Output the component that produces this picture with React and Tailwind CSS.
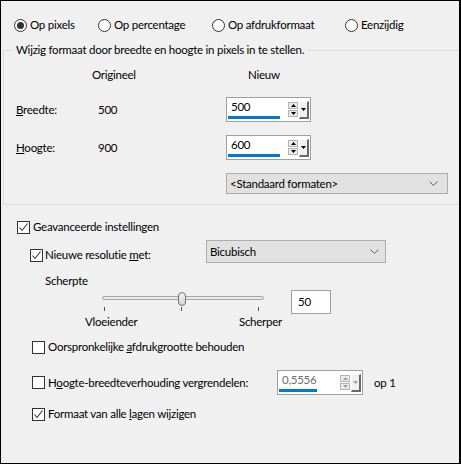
import React from 'react'

const font = "font-['Lato','Liberation_Sans',sans-serif]"

function Radio({ checked, label }) {
  return (
    <div className="flex items-center gap-[3px]">
      <span className="flex h-[13px] w-[13px] items-center justify-center rounded-full border border-[#333] bg-white">
        {checked && <span className="h-[7px] w-[7px] rounded-full bg-[#333]" />}
      </span>
      <span>{label}</span>
    </div>
  )
}

function Check({ checked, children, gap = 'gap-[3px]' }) {
  return (
    <div className={`flex h-[16px] items-center ${gap}`}>
      <span className="flex h-[13px] w-[13px] shrink-0 items-center justify-center border border-[#333] bg-white">
        {checked && (
          <svg width="11" height="11" viewBox="0 0 11 11">
            <polyline points="1.5,5.5 4,8.5 9.5,1.5" fill="none" stroke="#333" strokeWidth="1.1" />
          </svg>
        )}
      </span>
      <span className="whitespace-nowrap">{children}</span>
    </div>
  )
}

function Tri({ up, color = '#000' }) {
  return (
    <svg width="5" height="3" viewBox="0 0 5 3">
      <polygon points={up ? '0,3 5,3 2.5,0' : '0,0 5,0 2.5,3'} fill={color} />
    </svg>
  )
}

function SpinField({ value, width = 'w-[85px]', bar = 'w-[52px]', disabled }) {
  const c = disabled ? '#a0a0a0' : '#000'
  return (
    <div className={`flex h-[25px] ${width} items-stretch border border-[#a0a0a0] bg-white`}>
      <div className="flex flex-1 flex-col justify-end pb-[2px] pl-[1px]">
        <span className={`pl-[3px] leading-[16px] ${disabled ? 'text-[#6d6d6d]' : 'text-black'}`}>{value}</span>
        <span className={`mt-[1px] h-[3px] ${bar} bg-[#0078d7]`} />
      </div>
      <div className="flex flex-col justify-center gap-[1px] pr-[1px]">
        <span className="flex h-[7px] w-[10px] items-center justify-center border border-[#b4b4b4] bg-[#ececec]">
          <Tri up color={c} />
        </span>
        <span className="flex h-[7px] w-[10px] items-center justify-center border border-[#b4b4b4] bg-[#ececec]">
          <Tri color={c} />
        </span>
      </div>
      <div className="flex items-center pr-[1px]">
        <span className="flex h-[18px] w-[10px] items-center justify-center border-t border-l border-r-2 border-b-2 border-t-white border-l-white border-r-[#696969] border-b-[#696969] bg-[#f0f0f0]">
          <Tri color={c} />
        </span>
      </div>
    </div>
  )
}

function Chevron() {
  return (
    <svg width="9" height="5" viewBox="0 0 9 5">
      <polyline points="0.5,0.5 4.5,4.5 8.5,0.5" fill="none" stroke="#606060" strokeWidth="1" />
    </svg>
  )
}

function Select({ value, className }) {
  return (
    <div className={`flex items-center justify-between border border-[#adadad] bg-[#e1e1e1] pl-[3px] pr-[6px] ${className}`}>
      <span>{value}</span>
      <Chevron />
    </div>
  )
}

export default function App() {
  return (
    <div className={`${font} h-[464px] w-[461px] overflow-hidden border border-r-2 border-black bg-[#f0f0f0] text-[11.5px] leading-[16px] tracking-[-0.25px] text-black`}>
      <div className="mt-[16px] flex h-[16px] items-center pl-[13px]">
        <div className="w-[84px]"><Radio checked label="Op pixels" /></div>
        <div className="w-[114px]"><Radio label="Op percentage" /></div>
        <div className="w-[133px]"><Radio label="Op afdrukformaat" /></div>
        <Radio label="Eenzijdig" />
      </div>

      <fieldset className="ml-[2px] mt-[9px] w-[480px] border border-[#dcdcdc] pb-[10px] pl-[12px]">
        <legend className="-ml-[3px] px-[3px] leading-[16px]">
          Wijzig formaat door breedte en hoogte in pixels in te stellen.
        </legend>
        <div className="mt-[9px] flex h-[16px]">
          <span className="w-[76px]" />
          <span className="w-[156px]">Origineel</span>
          <span>Nieuw</span>
        </div>
        <div className="mt-[14px] flex h-[25px] items-center">
          <span className="w-[82px]"><u>B</u>reedte:</span>
          <span className="w-[128px]">500</span>
          <SpinField value="500" />
        </div>
        <div className="mt-[13px] flex h-[25px] items-center">
          <span className="w-[82px]"><u>H</u>oogte:</span>
          <span className="w-[128px]">900</span>
          <SpinField value="600" />
        </div>
        <div className="mt-[13px] flex">
          <span className="w-[210px]" />
          <Select value="<Standaard formaten>" className="h-[21px] w-[222px] pr-[9px]" />
        </div>
      </fieldset>

      <div className="mt-[14px] pl-[16px]">
        <Check checked>Geavanceerde instellingen</Check>
      </div>

      <div className="mt-[5px] flex pl-[29px]">
        <div className="mt-[7px] w-[176px]">
          <Check checked gap="gap-[2px]">
            Nieuwe resolutie <u>m</u>et:
          </Check>
        </div>
        <Select value="Bicubisch" className="h-[23px] w-[180px]" />
      </div>

      <div className="mt-[10px] h-[16px] pl-[44px]">Scherpte</div>

      <div className="mt-[1px] flex pl-[81px]">
        <div className="flex w-[209px] flex-col">
          <div className="relative ml-[20px] h-[16px] w-[162px]">
            <span className="absolute left-0 right-0 top-[6px] h-[4px] rounded-full border border-[#a7a7a7] bg-[#e7eaea]" />
            <span className="absolute left-[76px] top-[2px] h-[14px] w-[8px] rounded-[4px] border border-[#707070] bg-gradient-to-b from-[#f2f2f2] to-[#d4d6da]" />
          </div>
          <div className="mt-[1px] ml-[22px] flex h-[4px] w-[155px] justify-between">
            <span className="w-px bg-[#555]" />
            <span className="w-px bg-[#555]" />
            <span className="w-px bg-[#555]" />
          </div>
          <div className="mt-[3px] flex h-[16px] justify-between pl-[3px] pr-[9px]">
            <span>Vloeiender</span>
            <span>Scherper</span>
          </div>
        </div>
        <div className="flex h-[24px] w-[40px] items-center border border-[#a0a0a0] bg-white pl-[6px]">50</div>
      </div>

      <div className="mt-[9px] pl-[31px]">
        <Check>
          Oorspronkelijke <u>a</u>fdrukgrootte behouden
        </Check>
      </div>

      <div className="mt-[15px] flex h-[25px] items-center pl-[31px]">
        <div className="w-[245px]">
          <Check>
            H<u>o</u>ogte-breedteverhouding vergrendelen:
          </Check>
        </div>
        <SpinField value="0,5556" width="w-[86px]" bar="w-[38px]" disabled />
        <span className="ml-[11px]">op 1</span>
      </div>

      <div className="mt-[11px] pl-[31px]">
        <Check checked>
          Formaat van alle <u>l</u>agen wijzigen
        </Check>
      </div>
    </div>
  )
}
